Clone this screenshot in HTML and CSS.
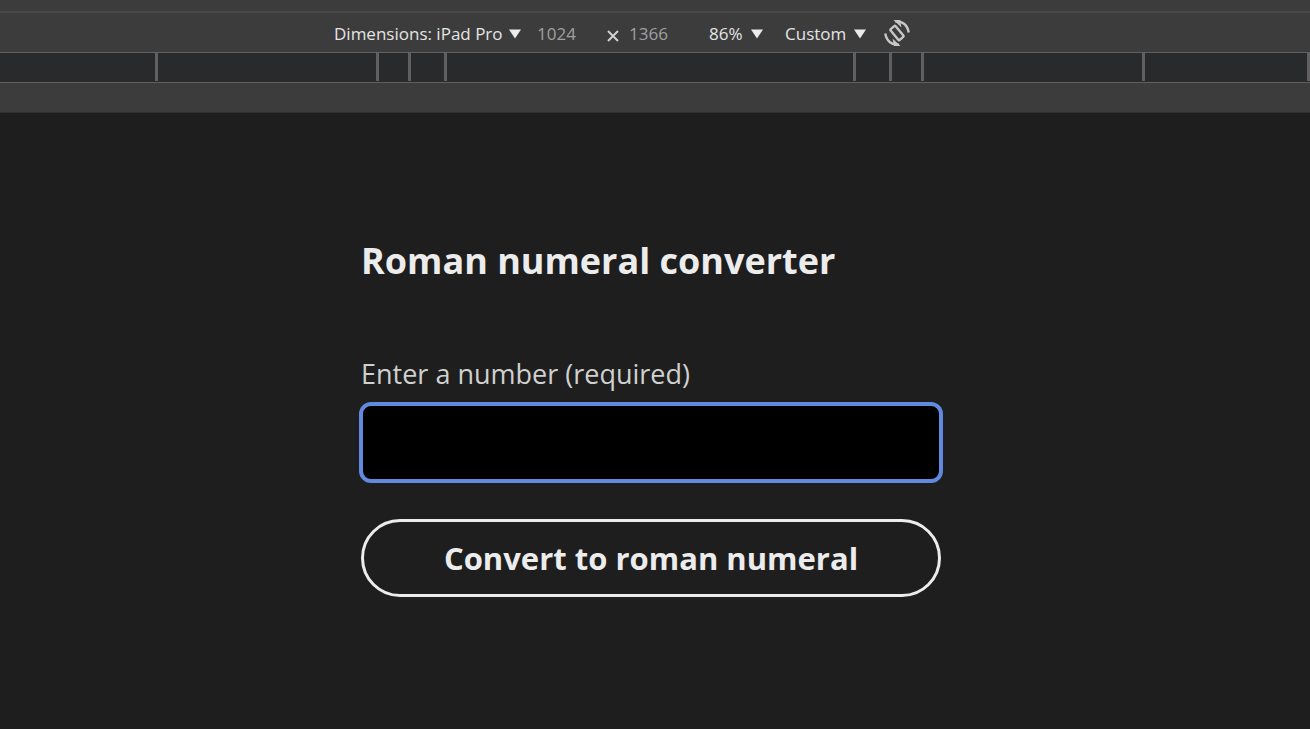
FILE: index.html
```html
<!DOCTYPE html>
<html lang="en">
<head>
<meta charset="utf-8">
<meta name="viewport" content="width=device-width, initial-scale=1">
<title>Roman numeral converter</title>
<link rel="stylesheet" href="styles.css">
</head>
<body>
<header class="device-bar">
  <div class="top-strip"></div>
  <div class="toolbar">
    <div class="picker picker-device">
      <select class="picker-select" aria-label="Device"><option>Dimensions: iPad Pro</option></select>
      <svg class="arrow" viewBox="0 0 12 10" aria-hidden="true"><path d="M0 .5h12L6 9.500z"/></svg>
    </div>
    <input class="size-input" type="text" value="1024" aria-label="Width">
    <svg class="times" viewBox="0 0 12 12" aria-hidden="true"><path d="M1 1l10 10M11 1L1 11"/></svg>
    <input class="size-input" type="text" value="1366" aria-label="Height">
    <div class="picker picker-zoom">
      <select class="picker-select" aria-label="Zoom"><option>86%</option></select>
      <svg class="arrow" viewBox="0 0 12 10" aria-hidden="true"><path d="M0 .5h12L6 9.500z"/></svg>
    </div>
    <div class="picker picker-throttle">
      <select class="picker-select" aria-label="Throttling"><option>Custom</option></select>
      <svg class="arrow" viewBox="0 0 12 10" aria-hidden="true"><path d="M0 .5h12L6 9.500z"/></svg>
    </div>
    <button class="rotate" type="button" aria-label="Rotate">
      <svg class="rotate-icon" viewBox="0 0 26 26" aria-hidden="true">
        <rect x="9.700" y="6" width="6.600" height="14" rx="1" transform="rotate(-40 13 13)"/>
        <path d="M11 1.300C18 .5 23.500 5 24.700 12.500M15 24.700C8 25.500 2.500 21 1.300 13.500"/>
        <path class="tip" d="M9.500 0H16l1.500 7.500zM16.500 26H10L8.500 18.500z"/>
      </svg>
    </button>
  </div>
  <div class="ruler">
    <span class="mark"></span><span class="mark"></span><span class="mark"></span>
    <span class="mark"></span><span class="mark"></span><span class="mark"></span>
    <span class="mark"></span><span class="mark"></span><span class="mark"></span>
  </div>
  <div class="bottom-strip"></div>
</header>
<main class="page">
  <form class="converter">
    <h1 class="title">Roman numeral converter</h1>
    <label class="label" for="number">Enter a number (required)</label>
    <input class="number" id="number" type="text" required>
    <button class="convert" type="button">Convert to roman numeral</button>
  </form>
</main>
</body>
</html>
```
FILE: styles.css
```css
* {
  box-sizing: border-box;
}

body {
  margin: 0;
  background: #1e1e1e;
  color: #ececec;
  font-family: "Open Sans", "Noto Sans", sans-serif;
}

.device-bar {
  background: #3c3c3c;
}

.top-strip {
  height: 13px;
  border-bottom: 2px solid #484848;
}

.toolbar {
  display: flex;
  align-items: center;
  justify-content: center;
  height: 39px;
  padding: 2px 66px 0 0;
}

.picker {
  position: relative;
  display: flex;
  align-items: center;
}

.picker-device {
  width: 187px;
  margin-right: 16px;
}

.picker-zoom {
  width: 54px;
  margin-right: 22px;
}

.picker-throttle {
  width: 81px;
  margin-right: 18px;
}

.picker-select {
  width: 100%;
  padding: 0;
  border: 0;
  appearance: none;
  background: transparent;
  color: #e4e4e4;
  font: 17px/24px "Open Sans", "Noto Sans", sans-serif;
}

.arrow {
  position: absolute;
  right: 0;
  width: 12px;
  height: 10px;
  fill: #ececec;
  pointer-events: none;
}

.size-input {
  width: 70px;
  padding: 0;
  border: 0;
  background: transparent;
  color: #a0a0a0;
  font: 17px/24px "Open Sans", "Noto Sans", sans-serif;
}

.times {
  width: 12px;
  height: 12px;
  margin: 4px 10px 0 0;
  fill: none;
  stroke: #d0d0d0;
  stroke-width: 2;
}

.size-input + .picker {
  margin-left: 10px;
}

.rotate {
  display: flex;
  margin-bottom: 2px;
  padding: 0;
  border: 0;
  background: transparent;
}

.rotate-icon {
  width: 26px;
  height: 26px;
  fill: none;
  stroke: #c8c8c8;
  stroke-width: 2.4;
}

.tip {
  fill: #c8c8c8;
  stroke: none;
}

.ruler {
  display: grid;
  grid-template-columns: 158fr 221px 32px 36px 409px 36px 32px 221px 165fr;
  height: 31px;
  padding-bottom: 1px;
  border: solid #606060;
  border-width: 1px 0;
  background: #292a2b;
}

.mark {
  border-right: 3px solid #606060;
}

.bottom-strip {
  height: 30px;
  border-bottom: 1px solid #303030;
}

.page {
  padding: 124px 16px 64px 8px;
}

.converter {
  display: flex;
  flex-direction: column;
  max-width: 584px;
  margin: 0 auto;
}

.title {
  margin: 0 2px 70px;
  font-size: 36px;
  font-weight: 700;
  line-height: 48px;
}

.label {
  margin: 0 2px 9px;
  color: #d0d0d0;
  font-size: 27px;
  line-height: 38px;
}

.number {
  height: 81px;
  padding: 0 16px;
  border: 4px solid #6189e0;
  border-radius: 12px;
  outline: 0;
  background: #000;
  color: #ececec;
  font: 27px/40px "Open Sans", "Noto Sans", sans-serif;
}

.convert {
  margin: 36px 2px 0;
  padding: 12px 16px;
  border: 3px solid #ececec;
  border-radius: 40px;
  background: transparent;
  color: #ececec;
  font: 700 31px/48px "Open Sans", "Noto Sans", sans-serif;
}
```
